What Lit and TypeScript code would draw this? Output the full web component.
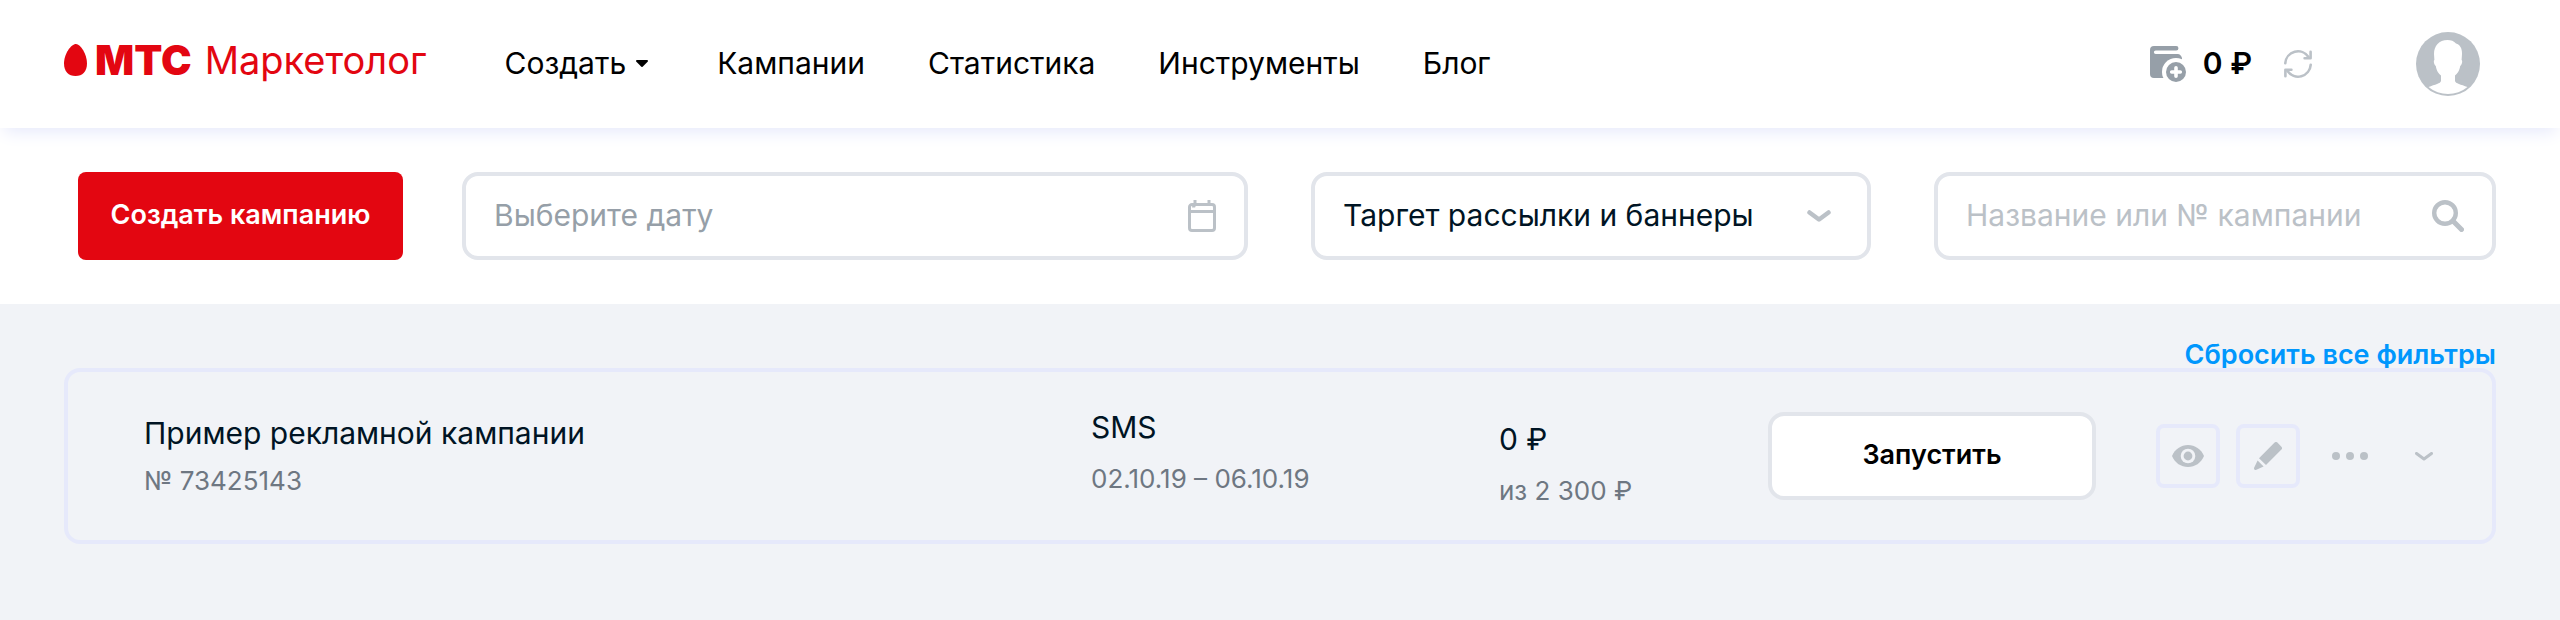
import { LitElement, html, css, svg } from "lit";
import { customElement, state } from "lit/decorators.js";

const icons = {
  egg: svg`<path d="M12 0C16.500 0 23 10 23 19.500C23 27.500 18.500 32 11.500 32S0 27.500 0 19.500C0 10 7 0 12 0Z" fill="#e30611"/>`,
  caret: svg`<path d="M1.200 0h9.600c1 0 1.500 1 .8 1.800L6.900 6.600a1.300 1.300 0 0 1-1.800 0L.4 1.800C-.3 1 .2 0 1.200 0Z" fill="#000"/>`,
  wallet: svg`
    <path d="M4 0h22.200a2.200 2.200 0 0 1 0 4.500H5.700a1.800 1.800 0 0 0 0 3.600h21.800a4.500 4.500 0 0 1 4.500 4.500V18L18 32H4a4 4 0 0 1-4-4V4a4 4 0 0 1 4-4Z" fill="#969fa8"/>
    <circle cx="26" cy="26" r="14" fill="#fff"/>
    <circle cx="26" cy="26" r="10" fill="#969fa8"/>
    <path d="M26 21.700v8.600M21.700 26h8.600" stroke="#fff" stroke-width="3.600" stroke-linecap="round"/>`,
  refresh: svg`
    <g fill="none" stroke="#bbc1c7" stroke-width="2.600" stroke-linecap="round" stroke-linejoin="round">
      <path d="M1.300 13.200A12.700 12.700 0 0 1 24.500 7"/><path d="M26.600 1.800v6.400h-6"/>
      <path d="M26.700 14.800A12.700 12.700 0 0 1 3.500 21"/><path d="M1.400 26.200v-6.400h6"/>
    </g>`,
  avatar: svg`
    <circle cx="32" cy="32" r="32" fill="#bbc1c7"/>
    <path d="M31.500 8C23 8 18 14 18 22l.4 6c-1.200.6-.4 5 1.400 6 .7 5 3 7.500 5.200 9.500V49c-.4 2.500-6 3.500-12.500 6a30.500 30.500 0 0 0 39 0C45 52.500 39.400 51.500 39 49v-5.500c2.200-2 4.500-4.500 5.200-9.500 1.800-1 2.600-5.400 1.400-6l.4-6c0-6-2-9.500-6-10.500C38 9 35 8 31.500 8Z" fill="#fff"/>`,
  calendar: svg`
    <path d="M5.500 7.500a2 2 0 0 1 2-2h0M1.500 7a2.500 2.500 0 0 1 2.500-2.500h20a2.500 2.500 0 0 1 2.500 2.500v21a2.500 2.500 0 0 1-2.500 2.500H4A2.500 2.500 0 0 1 1.500 28Z" fill="none" stroke="#bbc1c7" stroke-width="3"/>
    <path d="M2 11.500h24M7 0v5M21 0v5" stroke="#bbc1c7" stroke-width="3"/>`,
  chevron: svg`<path d="M2.500 2.500l9.500 7 9.500-7" fill="none" stroke="#bbc1c7" stroke-width="4.500" stroke-linecap="round" stroke-linejoin="round"/>`,
  smallChevron: svg`<path d="M1.500 1.500L9 7l7.500-5.500" fill="none" stroke="#bbc1c7" stroke-width="3" stroke-linecap="round" stroke-linejoin="round"/>`,
  search: svg`
    <circle cx="13" cy="13" r="10.800" fill="none" stroke="#bbc1c7" stroke-width="4.400"/>
    <path d="M21 21l8.500 8.500" stroke="#bbc1c7" stroke-width="5" stroke-linecap="round"/>`,
  eye: svg`
    <path d="M0 11C3 4 9 0 16 0s13 4 16 11c-3 7-9 11-16 11S3 18 0 11Z" fill="#bbc1c7"/>
    <circle cx="16" cy="11" r="7.300" fill="#f1f3f7"/><circle cx="16" cy="11" r="4.400" fill="#bbc1c7"/>`,
  pencil: svg`
    <path d="M20.600.6a2 2 0 0 1 2.800 0l4 4.200a2 2 0 0 1 0 2.800L12 23 5 16.200ZM3.600 18.500l6 6-7.200 3.300C.6 28.400-.3 27.600.1 25.800Z" fill="#bbc1c7"/>`,
  dots: svg`<g fill="#bbc1c7"><circle cx="4" cy="4" r="4"/><circle cx="18" cy="4" r="4"/><circle cx="32" cy="4" r="4"/></g>`,
};

const icon = (name: keyof typeof icons, w: number, h: number) =>
  html`<svg width=${w} height=${h} viewBox="0 0 ${w} ${h}" aria-hidden="true">${icons[name]}</svg>`;

@customElement("app-root")
export class AppRoot extends LitElement {
  @state() private links = ["Кампании", "Статистика", "Инструменты", "Блог"];

  static styles = css`
    :host {
      display: block;
      min-height: 100vh;
      background: #f1f3f7;
      color: #001424;
      font: 400 30px/40px Inter, "Liberation Sans", sans-serif;
    }
    * { box-sizing: border-box; }
    svg { display: block; flex: none; }
    button, input, select { font: inherit; color: inherit; margin: 0; }
    button { border: 0; padding: 0; background: none; cursor: pointer; }
    a { color: inherit; text-decoration: none; }
    p, h2 { margin: 0; font: inherit; }

    .header {
      position: relative;
      display: flex;
      align-items: center;
      height: 128px;
      padding: 0 80px 0 64px;
      background: #fff;
      color: #000;
      box-shadow: 0 8px 16px -4px #e6e9fb;
    }
    .logo {
      display: flex;
      align-items: center;
      padding-bottom: 8px;
      color: #e30611;
      font-size: 38px;
    }
    .brand { margin: 0 13px 0 8px; font-size: 41px; font-weight: 900; }
    .nav {
      display: flex;
      align-items: center;
      gap: 63px;
      margin-left: 78px;
      padding-bottom: 2px;
    }
    .create { display: flex; align-items: center; gap: 10px; margin-right: 6px; }
    .account { display: flex; align-items: center; margin-left: auto; }
    .balance { margin: 0 32px 0 17px; padding-bottom: 2px; font-weight: 600; }
    .profile { margin-left: 104px; }

    .filters {
      display: flex;
      gap: 59px;
      padding: 44px 64px 44px 78px;
      background: #fff;
    }
    .fields {
      flex: 1;
      display: grid;
      grid-template-columns: 786fr 560fr 562fr;
      gap: 63px;
    }
    .primary {
      width: 325px;
      height: 88px;
      padding-bottom: 2px;
      border-radius: 8px;
      background: #e30611;
      color: #fff;
      font-size: 27px;
      font-weight: 600;
    }
    .field {
      display: flex;
      align-items: center;
      height: 88px;
      padding: 0 28px;
      border: 4px solid #e2e5eb;
      border-radius: 16px;
      background: #fff;
    }
    .field.select { padding-right: 36px; }
    .control {
      flex: 1;
      min-width: 0;
      height: 44px;
      padding: 0 0 2px;
      border: 0;
      outline: 0;
      background: none;
      appearance: none;
    }
    .control::placeholder { color: #bbc1c7; opacity: 1; }
    .date::placeholder { color: #969fa8; }

    .list { padding: 36px 64px; }
    .toolbar {
      display: flex;
      justify-content: flex-end;
      height: 28px;
      overflow: hidden;
    }
    .reset { color: #0097fd; font-size: 27px; font-weight: 600; line-height: 30px; }
    .card {
      display: grid;
      grid-template-columns: 947fr 408fr 269fr 328px 396px;
      align-items: center;
      height: 176px;
      padding-left: 76px;
      border: 4px solid #e6e9fb;
      border-radius: 16px;
    }
    .cell { display: flex; flex-direction: column; gap: 14px; }
    .cell.name { gap: 10px; }
    .cell.channel { padding-bottom: 8px; }
    .cell.price { padding-top: 16px; }
    .sub { color: #6e7782; font-size: 26px; line-height: 36px; }
    .launch {
      height: 88px;
      padding-bottom: 2px;
      border: 4px solid #e2e5eb;
      border-radius: 16px;
      background: #fff;
      color: #000;
      font-size: 27px;
      font-weight: 600;
    }
    .actions { display: flex; align-items: center; gap: 16px; padding-left: 60px; }
    .square {
      display: grid;
      place-items: center;
      width: 64px;
      height: 64px;
      border: 4px solid #e6e9fb;
      border-radius: 8px;
    }
    .more { margin: 0 31px 0 16px; }
  `;

  render() {
    return html`
      <header class="header">
        <a class="logo" href="#">
          ${icon("egg", 23, 32)}<span class="brand">МТС</span><span>Маркетолог</span>
        </a>
        <nav class="nav">
          <button class="create">Создать ${icon("caret", 12, 7)}</button>
          ${this.links.map((l) => html`<a href="#">${l}</a>`)}
        </nav>
        <div class="account">
          <button aria-label="Пополнить">${icon("wallet", 36, 36)}</button>
          <span class="balance">0 ₽</span>
          <button aria-label="Обновить">${icon("refresh", 28, 28)}</button>
          <button class="profile" aria-label="Профиль">${icon("avatar", 64, 64)}</button>
        </div>
      </header>

      <section class="filters">
        <button class="primary">Создать кампанию</button>
        <div class="fields">
          <label class="field">
            <input class="control date" aria-label="Дата" placeholder="Выберите дату" />
            ${icon("calendar", 28, 32)}
          </label>
          <label class="field select">
            <select class="control" aria-label="Тип кампании">
              <option>Таргет рассылки и баннеры</option>
            </select>
            ${icon("chevron", 24, 12)}
          </label>
          <label class="field">
            <input class="control" aria-label="Поиск" placeholder="Название или № кампании" />
            ${icon("search", 32, 32)}
          </label>
        </div>
      </section>

      <main class="list">
        <div class="toolbar"><a class="reset" href="#">Сбросить все фильтры</a></div>
        <article class="card">
          <div class="cell name">
            <h2>Пример рекламной кампании</h2>
            <p class="sub">№ 73425143</p>
          </div>
          <div class="cell channel">
            <p>SMS</p>
            <p class="sub">02.10.19 – 06.10.19</p>
          </div>
          <div class="cell price">
            <p>0 ₽</p>
            <p class="sub">из 2 300 ₽</p>
          </div>
          <button class="launch">Запустить</button>
          <div class="actions">
            <button class="square" aria-label="Просмотр">${icon("eye", 32, 22)}</button>
            <button class="square" aria-label="Изменить">${icon("pencil", 28, 28)}</button>
            <button class="more" aria-label="Ещё">${icon("dots", 36, 8)}</button>
            <button aria-label="Развернуть">${icon("smallChevron", 18, 9)}</button>
          </div>
        </article>
      </main>
    `;
  }
}
